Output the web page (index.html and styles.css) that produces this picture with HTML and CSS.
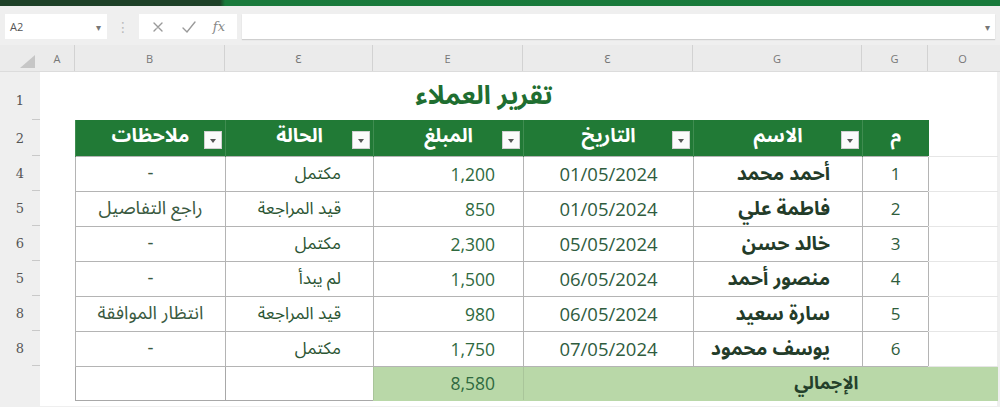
FILE: index.html
```html
<!DOCTYPE html>
<html lang="ar">
<head>
<meta charset="utf-8">
<link rel="stylesheet" href="styles.css">
</head>
<body>
<div class="titlebar"></div>
<div class="toolbar">
  <div class="namebox"><span>A2</span><span class="caret">▾</span></div>
  <div class="dots">⋮</div>
  <div class="fxbox">
    <svg width="14" height="14" viewBox="0 0 14 14"><path d="M3 3 L11 11 M11 3 L6 8 M3 11 L5 9" stroke="#9a9a9a" stroke-width="1.4" fill="none" stroke-linecap="round"/></svg>
    <svg width="16" height="14" viewBox="0 0 16 14"><path d="M2 8 L6 12 L14 2" stroke="#9a9a9a" stroke-width="1.4" fill="none" stroke-linecap="round"/></svg>
    <span class="fx">fx</span>
  </div>
  <div class="formula"><span class="caret">▾</span></div>
</div>
<div class="colheads">
  <div class="corner"><span class="tri"></span></div>
  <div class="ch">A</div>
  <div class="ch">B</div>
  <div class="ch">Ɛ</div>
  <div class="ch">E</div>
  <div class="ch">Ɛ</div>
  <div class="ch">G</div>
  <div class="ch">G</div>
  <div class="ch last">O</div>
</div>
<div class="sheet">
  <div class="rowheads">
    <div class="rh r1">1</div>
    <div class="rh r2">2</div>
    <div class="rh">4</div>
    <div class="rh">5</div>
    <div class="rh">6</div>
    <div class="rh">5</div>
    <div class="rh">8</div>
    <div class="rh">8</div>
    <div class="rh rt"></div>
  </div>
  <div class="cells">
    <div class="title">تقرير العملاء</div>
    <table class="report" dir="rtl">
      <colgroup>
        <col class="c-extra"><col class="c-num"><col class="c-name"><col class="c-date"><col class="c-amt"><col class="c-status"><col class="c-notes">
      </colgroup>
      <thead>
        <tr>
          <td class="extra"></td>
          <th>م</th>
          <th>الاسم<span class="dd"></span></th>
          <th>التاريخ<span class="dd"></span></th>
          <th>المبلغ<span class="dd"></span></th>
          <th>الحالة<span class="dd"></span></th>
          <th>ملاحظات<span class="dd"></span></th>
        </tr>
      </thead>
      <tbody>
        <tr><td class="extra"></td><td class="num">1</td><td class="name">أحمد محمد</td><td class="date">01/05/2024</td><td class="amt">1,200</td><td class="status">مكتمل</td><td class="notes">-</td></tr>
        <tr><td class="extra"></td><td class="num">2</td><td class="name">فاطمة علي</td><td class="date">01/05/2024</td><td class="amt">850</td><td class="status">قيد المراجعة</td><td class="notes">راجع التفاصيل</td></tr>
        <tr><td class="extra"></td><td class="num">3</td><td class="name">خالد حسن</td><td class="date">05/05/2024</td><td class="amt">2,300</td><td class="status">مكتمل</td><td class="notes">-</td></tr>
        <tr><td class="extra"></td><td class="num">4</td><td class="name">منصور أحمد</td><td class="date">06/05/2024</td><td class="amt">1,500</td><td class="status">لم يبدأ</td><td class="notes">-</td></tr>
        <tr><td class="extra"></td><td class="num">5</td><td class="name">سارة سعيد</td><td class="date">06/05/2024</td><td class="amt">980</td><td class="status">قيد المراجعة</td><td class="notes">انتظار الموافقة</td></tr>
        <tr><td class="extra"></td><td class="num">6</td><td class="name">يوسف محمود</td><td class="date">07/05/2024</td><td class="amt">1,750</td><td class="status">مكتمل</td><td class="notes">-</td></tr>
        <tr class="total"><td class="g" colspan="2"></td><td class="g tlabel">الإجمالي</td><td class="g"></td><td class="g amt">8,580</td><td class="w"></td><td class="w"></td></tr>
      </tbody>
    </table>
  </div>
</div>
</body>
</html>
```
FILE: styles.css
```css
* { box-sizing: border-box; }
html, body { margin: 0; padding: 0; }
body {
  width: 1000px;
  height: 407px;
  overflow: hidden;
  background: #efefef;
  font-family: "Open Sans", "Noto Sans Arabic", "DejaVu Sans", sans-serif;
}
.titlebar {
  height: 6px;
  background: linear-gradient(to right, #1e4128 0, #1e4128 220px, #1a7a3c 225px, #187a3b 100%);
}
.toolbar {
  height: 39px;
  display: flex;
  align-items: center;
  padding: 2px 5px 0;
  background: #efefef;
}
.namebox {
  width: 102px;
  height: 25px;
  background: #fff;
  display: flex;
  align-items: center;
  justify-content: space-between;
  padding: 0 6px 0 5px;
  font-size: 11px;
  color: #555;
}
.caret { font-size: 10px; color: #777; }
.dots {
  width: 32px;
  text-align: center;
  color: #bbb;
  font-size: 14px;
}
.fxbox {
  width: 98px;
  height: 25px;
  background: #fff;
  display: flex;
  align-items: center;
  justify-content: space-around;
  padding: 0 4px;
}
.fx { font-style: italic; color: #888; font-size: 13px; font-family: "DejaVu Serif", serif; }
.formula {
  flex: 1;
  height: 25px;
  margin-left: 5px;
  background: #fff;
  display: flex;
  align-items: center;
  justify-content: flex-end;
  padding-right: 5px;
  box-shadow: 0 1px 1px #cfcfcf;
}
.colheads {
  height: 27px;
  display: grid;
  grid-template-columns: 40px 35px 150px 148px 150px 170px 169px 66px 69px 1fr;
  background: #ebebeb;
  border-bottom: 1px solid #dcdcdc;
}
.corner { position: relative; }
.tri {
  position: absolute;
  left: 20px;
  top: 10px;
  width: 0; height: 0;
  border-left: 15px solid transparent;
  border-bottom: 13px solid #c6c6c6;
}
.ch {
  display: flex;
  align-items: center;
  justify-content: center;
  font-size: 11px;
  color: #777;
  border-right: 1px solid #d2d2d2;
}
.ch.last { border-right: none; }
.sheet { display: flex; }
.rowheads { width: 40px; }
.rh {
  position: relative;
  height: 35px;
  display: flex;
  align-items: center;
  justify-content: center;
  font-family: "DejaVu Serif", serif;
  font-size: 13px;
  color: #555;
}
.rh::after {
  content: "";
  position: absolute;
  right: 0;
  bottom: 0;
  width: 8px;
  border-bottom: 1px solid #c9c9c9;
}
.rh.r1 { height: 48px; padding-top: 8px; }
.rh.r2 { height: 36px; }
.rh.rt::after { display: none; }
.cells {
  width: 957px;
  height: 334px;
  background: #fff;
}
.title {
  height: 48px;
  width: 888px;
  display: flex;
  align-items: flex-end;
  justify-content: center;
  padding-bottom: 6px;
  line-height: 36px;
  font-family: "Noto Sans Arabic", "DejaVu Sans", sans-serif;
  font-weight: bold;
  font-size: 26px;
  color: #1f6e31;
}
.report {
  margin-left: 35px;
  width: 922px;
  table-layout: fixed;
  border-collapse: collapse;
  font-size: 17px;
  line-height: 30px;
}
.c-extra { width: 69px; }
.c-num { width: 66px; }
.c-name { width: 169px; }
.c-date { width: 170px; }
.c-amt { width: 150px; }
.c-status { width: 148px; }
.c-notes { width: 150px; }
.report thead tr { height: 36px; }
.report tbody tr { height: 35px; }
.report th {
  position: relative;
  background: #217a36;
  color: #fff;
  font-family: "Noto Sans Arabic", "DejaVu Sans", sans-serif;
  font-weight: bold;
  font-size: 19.5px;
  line-height: 30px;
  text-align: center;
  padding: 0 0 4px 0;
  border-left: 1px solid #3f8c50;
}
.dd {
  position: absolute;
  right: 3px;
  top: 11px;
  width: 18px;
  height: 18px;
  background: #fbfbfb;
  border: 1px solid #d0d0d0;
}
.dd::after {
  content: "";
  position: absolute;
  left: 5px;
  top: 7px;
  border-left: 3.5px solid transparent;
  border-right: 3.5px solid transparent;
  border-top: 4px solid #555;
}
.report td {
  padding: 0;
  border: 1px solid #b4b4b4;
  vertical-align: middle;
}
.report td.extra {
  border: none;
  border-bottom: 1px solid #e6e6e6;
}
.num { text-align: center; color: #2f5d3c; }
.name {
  text-align: right;
  padding-right: 32px !important;
  font-family: "Noto Sans Arabic", "DejaVu Sans", sans-serif;
  font-weight: bold;
  font-size: 19.5px;
  color: #233c29;
}
.date { text-align: center; color: #2f5c3e; font-size: 18.5px; }
.amt { text-align: right; padding-right: 28px !important; color: #2f6a3f; font-size: 17.5px; }
.status {
  text-align: right;
  padding-right: 32px !important;
  font-family: "Noto Sans Arabic", "DejaVu Sans", sans-serif;
  font-size: 17px;
  color: #2b5533;
}
.notes {
  text-align: center;
  font-family: "Noto Sans Arabic", "DejaVu Sans", sans-serif;
  font-size: 18.5px;
  color: #3a5a41;
}
.report tr.total { height: 34px; }
.report td.g {
  background: #b9d8a8;
  border: none;
  border-bottom: 1px solid #b9d8a8;
}
.report td.g.amt { border-left: 1px solid #a9c59a; border-right: 1px solid #a9c59a; }
.tlabel {
  text-align: right;
  padding-right: 4px !important;
  font-family: "Noto Sans Arabic", "DejaVu Sans", sans-serif;
  font-weight: bold;
  font-size: 18px;
  color: #24402b;
}
.report td.w { background: #fff; border: 1px solid #a8a8a8; }
```
